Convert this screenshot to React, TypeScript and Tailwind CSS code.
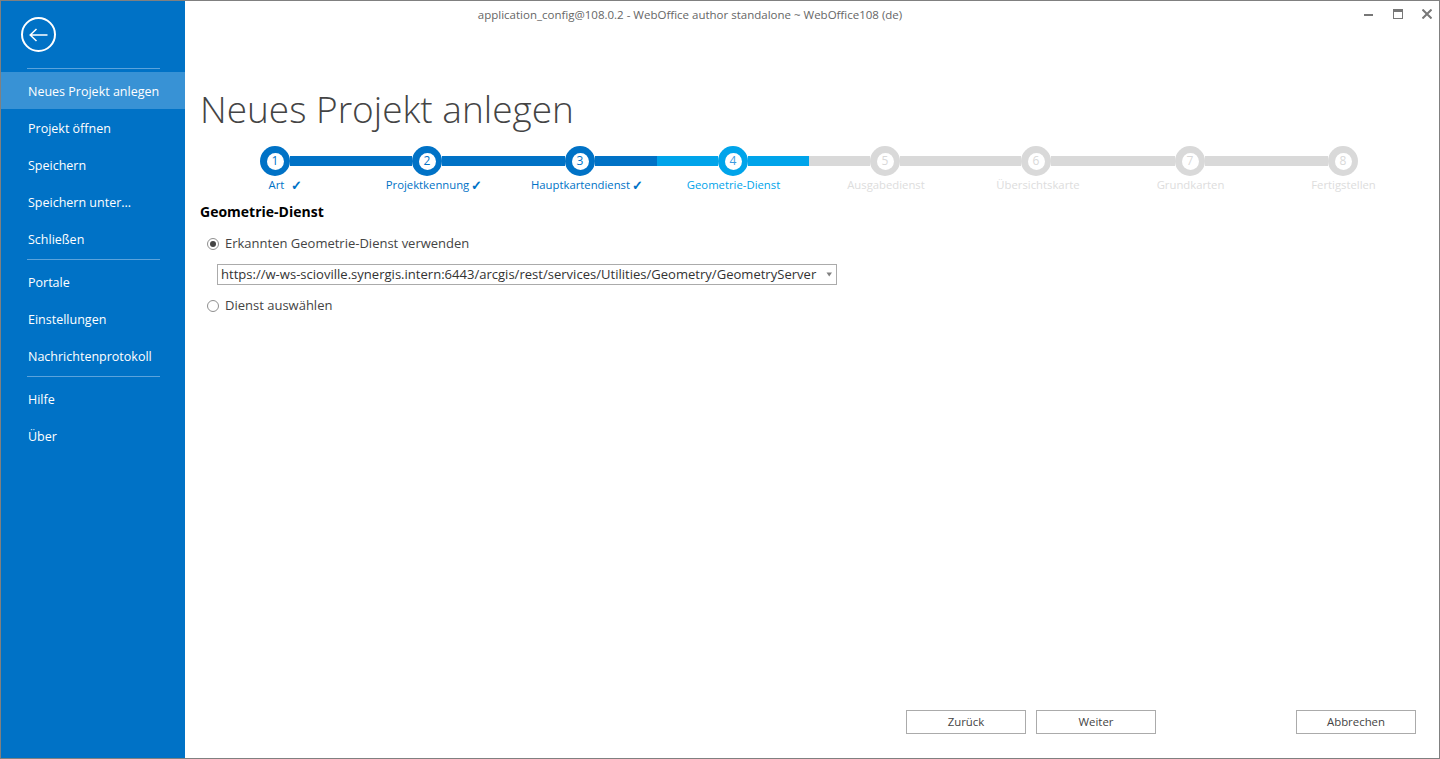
import React from "react";

const topItems = ["Neues Projekt anlegen", "Projekt öffnen", "Speichern", "Speichern unter...", "Schließen"];
const midItems = ["Portale", "Einstellungen", "Nachrichtenprotokoll"];
const lastItems = ["Hilfe", "Über"];

const steps = [
  { n: 1, label: "Art", check: true, state: "done", col: "w-[153px] pl-[22px]", gap: "ml-[7px]", bar: "w-[122px]", left: "bg-[#0072C6]", right: "bg-[#0072C6]" },
  { n: 2, label: "Projektkennung", check: true, state: "done", col: "w-[153px] pl-[13px]", gap: "ml-[2px]", bar: "w-[123px]", left: "bg-[#0072C6]", right: "bg-[#0072C6]" },
  { n: 3, label: "Hauptkartendienst", check: true, state: "done", col: "w-[153px] pl-[13px]", gap: "ml-[2px]", bar: "w-[123px]", left: "bg-[#0072C6]", right: "bg-[#00A4EA]" },
  { n: 4, label: "Geometrie-Dienst", check: false, state: "active", col: "w-[153px]", gap: "", bar: "w-[122px]", left: "bg-[#00A4EA]", right: "bg-[#D9D9D9]" },
  { n: 5, label: "Ausgabedienst", check: false, state: "todo", col: "w-[152px]", gap: "", bar: "w-[121px]", left: "bg-[#D9D9D9]", right: "bg-[#D9D9D9]" },
  { n: 6, label: "Übersichtskarte", check: false, state: "todo", col: "w-[152px]", gap: "", bar: "w-[124px]", left: "bg-[#D9D9D9]", right: "bg-[#D9D9D9]" },
  { n: 7, label: "Grundkarten", check: false, state: "todo", col: "w-[153px]", gap: "", bar: "w-[123px]", left: "bg-[#D9D9D9]", right: "bg-[#D9D9D9]" },
  { n: 8, label: "Fertigstellen", check: false, state: "todo", col: "w-[153px]", gap: "", bar: "", left: "", right: "" },
];

function MenuItem({ label, selected }: { label: string; selected?: boolean }) {
  return (
    <div className={`h-[37px] pl-[27px] pt-[3px] flex items-center text-[12.5px] text-white ${selected ? "bg-[#3892D5]" : ""}`}>
      {label}
    </div>
  );
}

function Separator() {
  return <div className="h-px w-[133px] ml-[26px] bg-[#5BA3DC]" />;
}

function Circle({ n, state }: { n: number; state: string }) {
  const ring = state === "done" ? "bg-[#0072C6]" : state === "active" ? "bg-[#00A4EA]" : "bg-[#D9D9D9]";
  const text = state === "done" ? "text-[#0072C6]" : state === "active" ? "text-[#3C9BE0]" : "text-[#D9D9D9]";
  return (
    <div className={`w-[30px] h-[30px] shrink-0 rounded-full flex items-center justify-center ${ring}`}>
      <div className={`w-[17px] h-[17px] rounded-full bg-white flex items-center justify-center text-[12px] leading-none ${text}`}>
        {n}
      </div>
    </div>
  );
}

function WizardButton({ label, className }: { label: string; className?: string }) {
  return (
    <button className={`block w-[120px] h-[24px] border border-[#ABABAB] bg-white text-[11.4px] text-[#444444] ${className ?? ""}`}>
      {label}
    </button>
  );
}

function Radio({ checked }: { checked?: boolean }) {
  return (
    <span className="w-[12px] h-[12px] rounded-full border border-[#8F8F8F] bg-white flex items-center justify-center shrink-0">
      {checked && <span className="w-[6px] h-[6px] rounded-full bg-[#444444]" />}
    </span>
  );
}

export default function App() {
  return (
    <div className="w-[1440px] h-[759px] flex bg-white border border-[#808080] overflow-hidden font-['Open_Sans',sans-serif]">
      {/* Sidebar */}
      <aside className="w-[184px] shrink-0 bg-[#0072C6] flex flex-col">
        <div className="h-[67px] pl-[20px] pt-[16px]">
          <div className="w-[35px] h-[35px] rounded-full border-2 border-white flex items-center justify-center">
            <svg width="19" height="14" viewBox="0 0 19 14" fill="none" stroke="white" strokeWidth="1.5">
              <path d="M1 7 H18.5 M7.5 1 L1.2 7 L7.5 13" />
            </svg>
          </div>
        </div>
        <Separator />
        <div className="mt-[3px]">
          {topItems.map((item, i) => (
            <MenuItem key={item} label={item} selected={i === 0} />
          ))}
        </div>
        <div className="mt-[2px]"><Separator /></div>
        <div className="mt-[3px]">
          {midItems.map((item) => (
            <MenuItem key={item} label={item} />
          ))}
        </div>
        <div className="mt-[2px]"><Separator /></div>
        <div className="mt-[3px]">
          {lastItems.map((item) => (
            <MenuItem key={item} label={item} />
          ))}
        </div>
      </aside>

      {/* Main */}
      <main className="flex-1 flex flex-col min-w-0">
        <div className="h-[28px] flex items-start relative">
          <div className="flex-1 pt-[6px] pr-[244px] text-center text-[11.5px] leading-[16px] text-[#666666]">
            application_config@108.0.2 - WebOffice author standalone ~ WebOffice108 (de)
          </div>
          <div className="absolute right-[7px] top-[8px] flex items-center gap-[19px]">
            <svg width="10" height="10" viewBox="0 0 10 10"><rect x="0" y="5" width="9" height="2" fill="#777777" /></svg>
            <svg width="10" height="10" viewBox="0 0 10 10"><rect x="0.5" y="0.5" width="9" height="9" fill="none" stroke="#777777" /><rect x="0" y="0" width="10" height="3" fill="#777777" /></svg>
            <svg width="10" height="10" viewBox="0 0 10 10"><path d="M0.5 0.5 L9.5 9.5 M9.5 0.5 L0.5 9.5" stroke="#777777" strokeWidth="2" fill="none" /></svg>
          </div>
        </div>

        <h1 className="mt-[55px] ml-[15px] text-[37px] leading-[50px] font-light text-[#444444]">
          Neues Projekt anlegen
        </h1>

        {/* Stepper */}
        <div className="mt-[12px] ml-[75px] flex items-center">
          {steps.map((s, i) => (
            <React.Fragment key={s.n}>
              <Circle n={s.n} state={s.state} />
              {i < steps.length - 1 && (
                <div className={`flex h-[10px] ${s.bar}`}>
                  <div className={`flex-1 ${s.left}`} />
                  <div className={`flex-1 ${s.right}`} />
                </div>
              )}
            </React.Fragment>
          ))}
        </div>
        <div className="mt-[1px] ml-[13px] flex h-[16px]">
          {steps.map((s) => (
            <div
              key={s.n}
              className={`shrink-0 text-center text-[11.3px] leading-[16px] font-medium ${s.col} ${
                s.state === "done" ? "text-[#0072C6]" : s.state === "active" ? "text-[#00A4EA]" : "text-[#DDDDDD]"
              }`}
            >
              {s.label}
              {s.check && <span className={`inline-block h-[16px] align-top text-[13px] leading-[16px] font-bold ${s.gap}`}>✓</span>}
            </div>
          ))}
        </div>

        {/* Form */}
        <div className="ml-[15px] mt-[9px]">
          <div className="text-[14px] leading-[20px] font-bold text-black">Geometrie-Dienst</div>
          <label className="mt-[12px] ml-[7px] flex items-center gap-[6px] h-[20px] text-[13px] text-[#444444]">
            <Radio checked />
            Erkannten Geometrie-Dienst verwenden
          </label>
          <div className="mt-[10px] ml-[17px] w-[620px] h-[21px] border border-[#ABABAB] flex items-center pl-[3px] pr-[3px] text-[13.05px] text-[#333333]">
            <span className="flex-1 whitespace-nowrap">https://w-ws-scioville.synergis.intern:6443/arcgis/rest/services/Utilities/Geometry/GeometryServer</span>
            <svg width="7" height="5" viewBox="0 0 7 5" className="shrink-0"><path d="M0.5 0.5 H6 L3.2 4.5 Z" fill="#808080" /></svg>
          </div>
          <label className="mt-[11px] ml-[7px] flex items-center gap-[6px] h-[20px] text-[13px] text-[#444444]">
            <Radio />
            Dienst auswählen
          </label>
        </div>

        {/* Footer buttons */}
        <div className="mt-auto mb-[24px] ml-[721px] flex">
          <WizardButton label="Zurück" />
          <WizardButton label="Weiter" className="ml-[10px]" />
          <WizardButton label="Abbrechen" className="ml-[140px]" />
        </div>
      </main>
    </div>
  );
}
